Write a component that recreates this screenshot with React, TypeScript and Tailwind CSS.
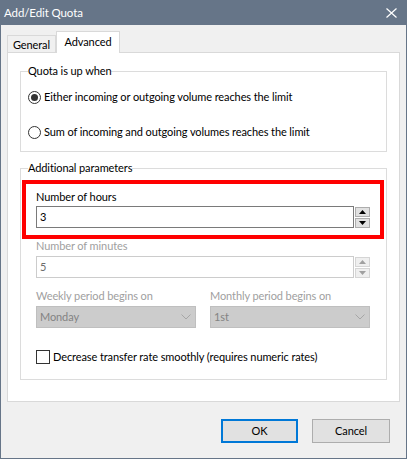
import React from "react";

const font = { fontFamily: 'Lato, "Noto Sans", sans-serif' };

function Spinner({ disabled }: { disabled?: boolean }) {
  const btn = disabled
    ? "flex h-[10px] w-[15px] items-center justify-center border border-[#d5d5d5] bg-[#efefef]"
    : "flex h-[10px] w-[15px] items-center justify-center border border-[#adadad] bg-[#e1e1e1]";
  const fill = disabled ? "#a0a0a0" : "#000000";
  return (
    <div className="ml-[1px] flex flex-col gap-[1px] pt-[1px]">
      <div className={btn}>
        <svg width="7" height="4" viewBox="0 0 7 4">
          <polygon points="0,4 7,4 3.5,0" fill={fill} />
        </svg>
      </div>
      <div className={btn}>
        <svg width="7" height="4" viewBox="0 0 7 4">
          <polygon points="0,0 7,0 3.5,4" fill={fill} />
        </svg>
      </div>
    </div>
  );
}

function Select({ value }: { value: string }) {
  return (
    <div className="flex h-[22px] flex-1 items-center justify-between border border-[#bfbfbf] bg-[#cccccc] pl-[3px] pr-[4px] text-[#838383]">
      <span>{value}</span>
      <svg width="10" height="6" viewBox="0 0 10 6">
        <polyline points="0.5,0.5 5,5 9.5,0.5" fill="none" stroke="#a6a6a6" strokeWidth="1" />
      </svg>
    </div>
  );
}

function Radio({ checked, label }: { checked?: boolean; label: string }) {
  return (
    <div className="flex h-[16px] items-center gap-[3px] whitespace-nowrap">
      <div className="flex h-[13px] w-[13px] items-center justify-center rounded-full border border-[#333333] bg-white">
        {checked && <div className="h-[7px] w-[7px] rounded-full bg-[#333333]" />}
      </div>
      <span>{label}</span>
    </div>
  );
}

export default function App() {
  return (
    <div
      className="flex h-[459px] w-[407px] flex-col border border-t-0 border-[#667588] bg-[#f0f0f0] text-[11px] leading-[16px] tracking-[-0.1px] text-black"
      style={font}
    >
      {/* title bar */}
      <div className="flex h-[25px] shrink-0 items-center justify-between bg-[#667588] pl-[3px] pr-[9px] text-[11.5px] text-white">
        <span>Add/Edit Quota</span>
        <svg width="11" height="10" viewBox="0 0 11 10">
          <path d="M0.5 0.5 L10.5 9.5 M10.5 0.5 L0.5 9.5" stroke="#ffffff" strokeWidth="1.2" />
        </svg>
      </div>

      {/* tabs */}
      <div className="mt-[6px] flex h-[21px] items-end pl-[6px]">
        <div className="flex h-[17px] w-[49px] items-center justify-center border border-b-0 border-[#d9d9d9] bg-[#f0f0f0] pt-[1px]">
          General
        </div>
        <div className="relative z-10 -mb-[1px] flex h-[22px] w-[64px] items-center justify-center border border-b-0 border-[#d9d9d9] bg-white pb-[2px]">
          Advanced
        </div>
      </div>

      {/* panel */}
      <div className="mx-[6px] border border-[#d9d9d9] bg-white px-[12px] pb-[21px] pt-[10px]">
        <fieldset className="border border-[#dcdcdc] px-[7px] pb-[11px]">
          <legend className="leading-[16px]">Quota is up when</legend>
          <div className="mt-[10px] flex flex-col gap-[19px]">
            <Radio checked label="Either incoming or outgoing volume reaches the limit" />
            <Radio label="Sum of incoming and outgoing volumes reaches the limit" />
          </div>
        </fieldset>

        <fieldset className="mt-[8px] border border-[#dcdcdc] px-[7px] pb-[14px]">
          <legend className="leading-[16px]">Additional parameters</legend>
          <div className="pl-[8px] pr-[9px]">
            <div className="-mx-[14px] mt-[4px] border-[4px] border-[#ff0000] px-[10px] pb-[7px] pt-[6px]">
              <div className="leading-[14px]">Number of hours</div>
              <div className="mt-[2px] flex">
                <div className="flex h-[22px] flex-1 items-center border border-[#7a7a7a] bg-white pl-[3px]">3</div>
                <Spinner />
              </div>
            </div>

            <div className="leading-[14px] text-[#a0a0a0]">Number of minutes</div>
            <div className="mt-[3px] flex">
              <div className="flex h-[22px] flex-1 items-center border border-[#cccccc] bg-white pl-[3px] text-[#6d6d6d]">5</div>
              <Spinner disabled />
            </div>

            <div className="mt-[11px] flex gap-[14px] leading-[14px] text-[#a0a0a0]">
              <div className="flex-1">Weekly period begins on</div>
              <div className="flex-1">Monthly period begins on</div>
            </div>
            <div className="mt-[3px] flex gap-[14px]">
              <Select value="Monday" />
              <Select value="1st" />
            </div>

            <div className="mt-[21px] flex h-[16px] items-center gap-[3px] whitespace-nowrap">
              <div className="h-[14px] w-[14px] border border-[#333333] bg-white" />
              <span>Decrease transfer rate smoothly (requires numeric rates)</span>
            </div>
          </div>
        </fieldset>
      </div>

      {/* buttons */}
      <div className="mt-[17px] flex justify-end gap-[14px] pr-[16px]">
        <button className="h-[24px] w-[77px] border-2 border-[#0078d7] bg-[#e1e1e1]">OK</button>
        <button className="h-[24px] w-[78px] border border-[#adadad] bg-[#e1e1e1]">Cancel</button>
      </div>
    </div>
  );
}
